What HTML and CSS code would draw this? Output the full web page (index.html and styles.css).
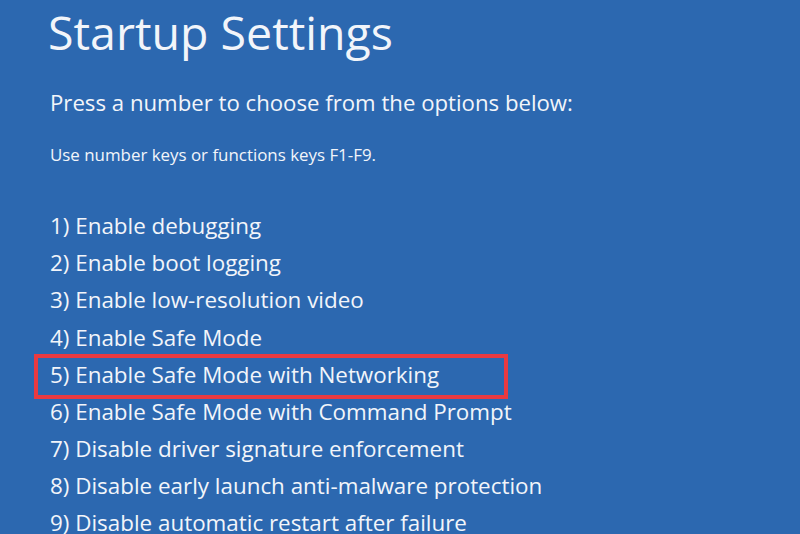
FILE: index.html
```html
<!DOCTYPE html>
<html>
<head>
<meta charset="utf-8">
<link rel="stylesheet" href="styles.css">
</head>
<body>
<main class="screen">
  <h1 class="title">Startup Settings</h1>
  <p class="subtitle">Press a number to choose from the options below:</p>
  <p class="hint">Use number keys or functions keys F1-F9.</p>
  <ol class="options">
    <li class="option">1) Enable debugging</li>
    <li class="option">2) Enable boot logging</li>
    <li class="option">3) Enable low-resolution video</li>
    <li class="option">4) Enable Safe Mode</li>
    <li class="option option-selected">5) Enable Safe Mode with Networking</li>
    <li class="option">6) Enable Safe Mode with Command Prompt</li>
    <li class="option">7) Disable driver signature enforcement</li>
    <li class="option">8) Disable early launch anti-malware protection</li>
    <li class="option">9) Disable automatic restart after failure</li>
  </ol>
</main>
</body>
</html>
```
FILE: styles.css
```css
html, body {
  margin: 0;
  padding: 0;
  background: #2c68b0;
  overflow: hidden;
}
.screen {
  width: 800px;
  height: 534px;
  background: #2c68b0;
  color: #f2f5fa;
  font-family: "Open Sans", "Noto Sans", sans-serif;
  padding: 0 0 0 48px;
  box-sizing: border-box;
  overflow: hidden;
}
.title {
  margin: 0;
  padding-top: 4px;
  font-size: 46.5px;
  font-weight: 400;
  line-height: 56px;
}
.subtitle {
  margin: 29px 0 0 2px;
  font-size: 22.2px;
  line-height: 28px;
  white-space: nowrap;
}
.hint {
  margin: 26.5px 0 0 2px;
  font-size: 16.9px;
  line-height: 22px;
  white-space: nowrap;
}
.options {
  list-style: none;
  margin: 41.75px 0 0 0;
  padding: 0;
}
.option {
  font-size: 22.4px;
  line-height: 37.1px;
  height: 37.1px;
  padding-left: 2px;
  white-space: nowrap;
}
.option-selected {
  position: relative;
}
.option-selected::before {
  content: "";
  position: absolute;
  left: -14px;
  top: -1.65px;
  width: 466px;
  height: 37px;
  border: 4px solid #ea3a40;
}
```
